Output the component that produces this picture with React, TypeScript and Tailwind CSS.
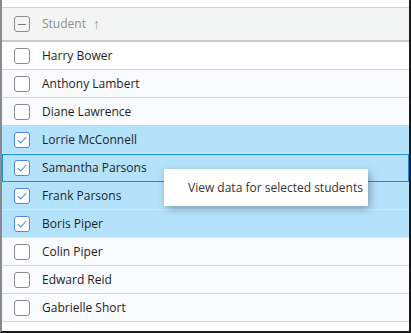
import React from "react";

const names = [
  "Harry Bower",
  "Anthony Lambert",
  "Diane Lawrence",
  "Lorrie McConnell",
  "Samantha Parsons",
  "Frank Parsons",
  "Boris Piper",
  "Colin Piper",
  "Edward Reid",
  "Gabrielle Short",
];
const selected = [3, 4, 5, 6];

function Box({ checked }: { checked: boolean }) {
  if (checked) {
    return (
      <div className="w-[16px] h-[16px] rounded-[3px] border border-[#4f86e8] bg-white flex items-center justify-center">
        <svg width="12" height="12" viewBox="0 0 12 12">
          <path d="M2 6.3 L4.8 9 L10.2 3" fill="none" stroke="#4f86e8" strokeWidth="1.1" />
        </svg>
      </div>
    );
  }
  return <div className="w-[16px] h-[16px] rounded-[3px] border border-[#8c8c8c] bg-white" />;
}

export default function App() {
  return (
    <div
      className="w-[411px] h-[333px] bg-white border-l-2 border-l-[#8a8a8a] border-r-2 border-r-[#1a1a1a] border-b-2 border-b-[#1a1a1a] relative overflow-hidden"
      style={{ fontFamily: '"Segoe UI", "Open Sans", "Noto Sans", sans-serif' }}
    >
      <div className="h-[7px]" />
      <div className="border-t border-[#d0d0d0] h-[35px] bg-[#f3f5f4] border-b-2 border-b-[#cacaca] flex items-center pl-[12px]">
        <div className="w-[16px] h-[16px] rounded-[3px] border border-[#8c8c8c] flex items-center justify-center">
          <div className="w-[8px] h-[1px] bg-[#7a7a7a]" />
        </div>
        <span className="ml-[12px] text-[12px] text-[#8d8d8d]">Student</span>
        <span className="ml-[7px] text-[14px] leading-none text-[#a0a0a0]">↑</span>
      </div>
      {names.map((n, i) => {
        const sel = selected.includes(i);
        const focus = i === 4;
        const bg = sel ? "bg-[#b5e2fb]" : i === 0 ? "bg-white" : "bg-[#f9fbfe]";
        const border = focus
          ? "border border-[#1a8ce0]"
          : sel
          ? "border-b border-b-[#d4e8f2]"
          : "border-b border-b-[#d3d3d3]";
        return (
          <div key={n} className={`h-[28px] flex items-center pl-[12px] ${bg} ${border}`}>
            <div className={focus ? "-ml-[1px]" : ""}>
              <Box checked={sel} />
            </div>
            <span className="ml-[12px] text-[12px] text-[#1e1e1e]">{n}</span>
          </div>
        );
      })}
      <div className="absolute left-[162px] top-[169px] w-[204px] h-[37px] bg-white shadow-[2px_3px_8px_rgba(0,0,0,0.3)] flex items-center pl-[24px] text-[12px] text-[#333]">
        View data for selected students
      </div>
    </div>
  );
}
